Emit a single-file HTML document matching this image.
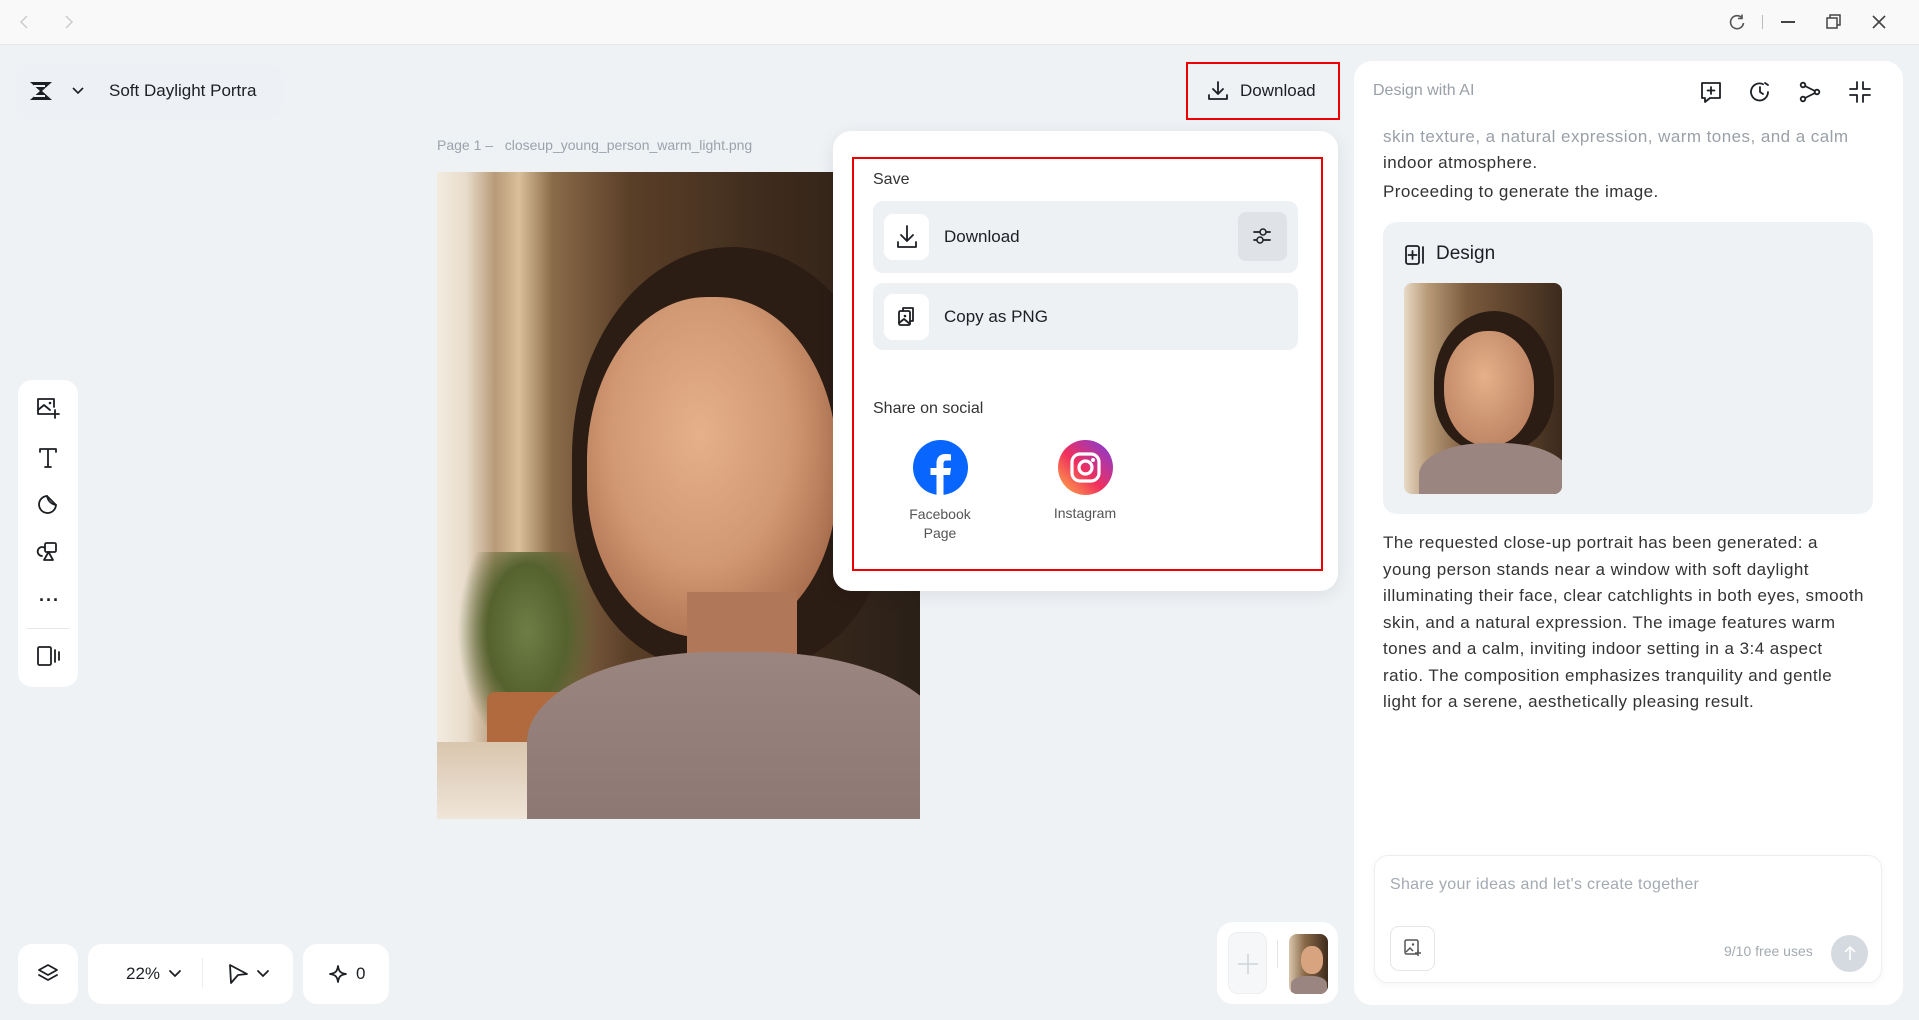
<!DOCTYPE html>
<html><head><meta charset="utf-8"><style>
*{box-sizing:border-box;margin:0;padding:0}
body{width:1919px;height:1020px;overflow:hidden;background:#eef2f5;font-family:"Liberation Sans",sans-serif;color:#1c1f23;position:relative}
.abs{position:absolute}
.top{left:0;top:0;width:1919px;height:45px;background:#f9f9f9;border-bottom:1px solid #e6e6e6}
.card{background:#fff;border-radius:14px}
svg{display:block}
.ic{stroke:#1c1f23;fill:none;stroke-width:1.8;stroke-linecap:round;stroke-linejoin:round}
.rt{font-size:17px;letter-spacing:0.45px}
</style></head><body>
<div class="abs top">
 <svg class="abs" style="left:18px;top:14px" width="14" height="16"><path d="M9 2 L3 8 L9 14" stroke="#ccc" fill="none" stroke-width="1.5"/></svg>
 <svg class="abs" style="left:62px;top:14px" width="14" height="16"><path d="M4 2 L10 8 L4 14" stroke="#ccc" fill="none" stroke-width="1.5"/></svg>
 <svg class="abs" style="left:1728px;top:13px" width="18" height="18"><path d="M14 5 A6.5 6.5 0 1 0 15.5 10" stroke="#555" fill="none" stroke-width="1.6"/><path d="M14 1.5 V5.5 H10" stroke="#555" fill="none" stroke-width="1.6"/></svg>
 <div class="abs" style="left:1762px;top:15px;width:1px;height:14px;background:#bbb"></div>
 <div class="abs" style="left:1781px;top:21px;width:14px;height:1.6px;background:#444"></div>
 <svg class="abs" style="left:1826px;top:14px" width="16" height="16"><rect x="1" y="4" width="10" height="10" stroke="#444" fill="none" stroke-width="1.5"/><path d="M4 4 V1 H14 V11 H11" stroke="#444" fill="none" stroke-width="1.5"/></svg>
 <svg class="abs" style="left:1871px;top:14px" width="16" height="16"><path d="M2 2 L14 14 M14 2 L2 14" stroke="#444" stroke-width="1.6"/></svg>
</div>

<div class="abs" style="left:17px;top:64px;width:265px;height:55px;background:#edf1f5;border-radius:14px"></div>
<svg class="abs" style="left:28px;top:80px" width="28" height="22"><path d="M2 2 H24 L14 11 L24 20 H2 L12 11 Z" fill="#1c1f23"/><path d="M6 6 H17 M6 16 H17" stroke="#edf1f5" stroke-width="2"/></svg>
<svg class="abs" style="left:72px;top:86px" width="12" height="10"><path d="M1 2 L6 7 L11 2" stroke="#1c1f23" fill="none" stroke-width="1.6"/></svg>
<div class="abs" style="left:109px;top:81px;font-size:17px">Soft Daylight Portra</div>

<div class="abs" style="left:437px;top:137px;font-size:14px;color:#9aa2ab">Page 1 –&nbsp;&nbsp; closeup_young_person_warm_light.png</div>

<div class="abs" style="left:437px;top:172px;width:483px;height:647px;overflow:hidden;background:linear-gradient(90deg,#f3ebe0 0%,#e8dccb 6%,#b89a78 12%,#d9bf9a 17%,#8a6a48 24%,#5a3f28 40%,#3d2a1c 70%,#2a2018 100%)">
 <div class="abs" style="left:20px;top:380px;width:140px;height:200px;background:radial-gradient(ellipse at 50% 40%,#6f7d45 0%,#55622f 40%,transparent 70%)"></div>
 <div class="abs" style="left:50px;top:520px;width:80px;height:70px;background:#b06a3e;border-radius:8px 8px 20px 20px"></div>
 <div class="abs" style="left:0;top:570px;width:200px;height:80px;background:linear-gradient(180deg,#d9c6ae,#f0e6da)"></div>
 <div class="abs" style="left:135px;top:75px;width:320px;height:420px;background:#2b1c14;border-radius:50% 50% 40% 40%"></div>
 <div class="abs" style="left:150px;top:125px;width:250px;height:340px;background:radial-gradient(ellipse at 45% 40%,#e5b08a 0%,#d29a74 45%,#a86c4c 80%);border-radius:48% 48% 45% 45%"></div>
 <div class="abs" style="left:250px;top:420px;width:110px;height:110px;background:#b07858"></div>
 <div class="abs" style="left:90px;top:480px;width:420px;height:200px;background:linear-gradient(180deg,#9b8580,#8a7570);border-radius:45% 45% 0 0"></div>
</div>

<div class="abs" style="left:1186px;top:62px;width:154px;height:58px;border:2px solid #e00"></div>
<svg class="abs" style="left:1207px;top:80px" width="22" height="22"><path d="M11 2 V14 M6 9 L11 14 L16 9 M2 15 V19 H20 V15" class="ic"/></svg>
<div class="abs" style="left:1240px;top:81px;font-size:17px">Download</div>

<div class="abs card" style="left:833px;top:131px;width:505px;height:460px;border-radius:18px;box-shadow:0 4px 18px rgba(0,0,0,.08)"></div>
<div class="abs" style="left:852px;top:157px;width:471px;height:414px;border:2px solid #e00"></div>
<div class="abs" style="left:873px;top:171px;font-size:16px;color:#333">Save</div>
<div class="abs" style="left:873px;top:201px;width:425px;height:72px;background:#eef1f4;border-radius:10px"></div>
<div class="abs" style="left:884px;top:214px;width:45px;height:46px;background:#fff;border-radius:9px"></div>
<svg class="abs" style="left:895px;top:224px" width="24" height="26"><path d="M12 2 V17 M6 11 L12 17 L18 11 M3 18 V23 H21 V18" class="ic"/></svg>
<div class="abs" style="left:944px;top:227px;font-size:17px">Download</div>
<div class="abs" style="left:1238px;top:212px;width:49px;height:49px;background:#dfe3e8;border-radius:8px"></div>
<svg class="abs" style="left:1250px;top:224px" width="24" height="24"><path d="M4 8 H20 M4 16 H20" class="ic" stroke-width="1.5"/><circle cx="13" cy="8" r="3" fill="#dfe3e8" stroke="#1c1f23" stroke-width="1.5"/><circle cx="10" cy="16" r="3" fill="#dfe3e8" stroke="#1c1f23" stroke-width="1.5"/></svg>
<div class="abs" style="left:873px;top:283px;width:425px;height:67px;background:#eef1f4;border-radius:10px"></div>
<div class="abs" style="left:884px;top:294px;width:45px;height:46px;background:#fff;border-radius:9px"></div>
<svg class="abs" style="left:896px;top:305px" width="22" height="24"><rect x="3" y="6" width="11" height="14" rx="1.5" class="ic"/><path d="M7 6 V3 H17 V16 H14" class="ic"/><circle cx="9" cy="11" r="1.3" fill="#1c1f23"/><path d="M3 18 L8 14 L14 19" class="ic"/></svg>
<div class="abs" style="left:944px;top:307px;font-size:17px">Copy as PNG</div>
<div class="abs" style="left:873px;top:400px;font-size:16px;color:#333">Share on social</div>
<svg class="abs" style="left:913px;top:440px" width="55" height="55"><circle cx="27.5" cy="27.5" r="27.5" fill="#0866ff"/><path d="M30.5 55 V35 H37 L38 28 H30.5 V23.5 C30.5 21.5 31.5 20.5 33.5 20.5 H38 V14.5 C36.5 14.2 34.5 14 32.5 14 C26.5 14 23.5 17.5 23.5 23 V28 H17.5 V35 H23.5 V55 Z" fill="#fff"/></svg>
<svg class="abs" style="left:1058px;top:440px" width="55" height="55"><defs><linearGradient id="ig" x1="0" y1="1" x2="1" y2="0"><stop offset="0" stop-color="#fdb446"/><stop offset=".45" stop-color="#f12f5d"/><stop offset="1" stop-color="#7a3ce0"/></linearGradient></defs><circle cx="27.5" cy="27.5" r="27.5" fill="url(#ig)"/><rect x="14" y="14" width="27" height="27" rx="8" fill="none" stroke="#fff" stroke-width="3.2"/><circle cx="27.5" cy="27.5" r="6.5" fill="none" stroke="#fff" stroke-width="3.2"/><circle cx="35" cy="20" r="2" fill="#fff"/></svg>
<div class="abs" style="left:890px;top:505px;width:100px;text-align:center;font-size:14px;color:#555;line-height:19px">Facebook<br>Page</div>
<div class="abs" style="left:1035px;top:505px;width:100px;text-align:center;font-size:14px;color:#555">Instagram</div>

<div class="abs card" style="left:1354px;top:61px;width:549px;height:944px;border-radius:18px"></div>
<div class="abs" style="left:1373px;top:82px;font-size:16px;color:#9aa0a8">Design with AI</div>
<svg class="abs" style="left:1699px;top:80px" width="24" height="24"><path d="M3 3 H21 V18 H11 L6 22 V18 H3 Z" class="ic"/><path d="M12 7 V14 M8.5 10.5 H15.5" class="ic"/></svg>
<svg class="abs" style="left:1748px;top:80px" width="24" height="24"><path d="M20 12 A8.5 8.5 0 1 1 15 4.2" class="ic"/><path d="M12 7 V12 L15 14" class="ic"/><path d="M17 3 L20 5" class="ic"/></svg>
<svg class="abs" style="left:1798px;top:80px" width="24" height="24"><circle cx="5" cy="5" r="2.3" class="ic"/><circle cx="19" cy="12" r="2.3" class="ic"/><circle cx="5" cy="19" r="2.3" class="ic"/><path d="M7 6 L17 11 M7 18 L17 13" class="ic"/></svg>
<svg class="abs" style="left:1848px;top:80px" width="24" height="24"><path d="M9 2 V9 H2 M15 2 V9 H22 M9 22 V15 H2 M15 22 V15 H22" class="ic"/></svg>
<div class="abs rt" style="left:1383px;top:124px;width:520px;line-height:26px;color:#9aa0a8;white-space:nowrap">skin texture, a natural expression, warm tones, and a calm<br><span style="color:#333">indoor atmosphere.</span></div>
<div class="abs rt" style="left:1383px;top:182px;color:#333">Proceeding to generate the image.</div>
<div class="abs" style="left:1383px;top:222px;width:490px;height:292px;background:#eef2f5;border-radius:14px"></div>
<svg class="abs" style="left:1404px;top:244px" width="22" height="22"><rect x="2" y="2" width="13" height="18" rx="2" class="ic"/><path d="M8.5 7 V15 M4.5 11 H12.5 M19 3 V19" class="ic"/></svg>
<div class="abs" style="left:1436px;top:243px;font-size:19px">Design</div>
<div class="abs" style="left:1404px;top:283px;width:158px;height:211px;border-radius:8px;overflow:hidden;background:linear-gradient(90deg,#e8dac6 0%,#b89a78 15%,#7a5a3c 40%,#3d2a1c 100%)">
 <div class="abs" style="left:30px;top:28px;width:120px;height:140px;background:#2b1c14;border-radius:50% 50% 40% 40%"></div>
 <div class="abs" style="left:40px;top:48px;width:90px;height:115px;background:radial-gradient(ellipse at 45% 40%,#e5b08a,#b07656);border-radius:48%"></div>
 <div class="abs" style="left:15px;top:160px;width:150px;height:70px;background:#9b8580;border-radius:45% 45% 0 0"></div>
</div>
<div class="abs rt" style="left:1383px;top:530px;width:520px;line-height:26.5px;color:#333;white-space:nowrap">The requested close-up portrait has been generated: a<br>young person stands near a window with soft daylight<br>illuminating their face, clear catchlights in both eyes, smooth<br>skin, and a natural expression. The image features warm<br>tones and a calm, inviting indoor setting in a 3:4 aspect<br>ratio. The composition emphasizes tranquility and gentle<br>light for a serene, aesthetically pleasing result.</div>

<div class="abs card" style="left:1374px;top:855px;width:508px;height:128px;border:1px solid #eceef0;box-shadow:0 2px 8px rgba(0,0,0,.04)"></div>
<div class="abs" style="left:1390px;top:876px;font-size:16px;color:#a4aab2;letter-spacing:0.3px">Share your ideas and let's create together</div>
<div class="abs" style="left:1390px;top:926px;width:45px;height:45px;border:1px solid #e3e6ea;border-radius:9px"></div>
<svg class="abs" style="left:1403px;top:938px" width="20" height="20"><rect x="2" y="2" width="13" height="14" rx="1.5" stroke="#555" fill="none" stroke-width="1.5"/><circle cx="10" cy="6.5" r="1.2" fill="#555"/><path d="M3 14 L7 10 L10 13 M15 12 V18 M12 15 H18" stroke="#555" fill="none" stroke-width="1.5"/></svg>
<div class="abs" style="left:1724px;top:943px;font-size:14px;color:#a4aab2">9/10 free uses</div>
<div class="abs" style="left:1831px;top:935px;width:37px;height:37px;border-radius:50%;background:#d5dae0"></div>
<svg class="abs" style="left:1841px;top:944px" width="18" height="18"><path d="M9 16 V3 M4 8 L9 3 L14 8" stroke="#fff" fill="none" stroke-width="1.6"/></svg>

<div class="abs card" style="left:18px;top:380px;width:60px;height:307px"></div>
<svg class="abs" style="left:35px;top:396px" width="26" height="26"><path d="M19 11 V3 H3 V18 H15" class="ic"/><path d="M3 14 L9 9 L15 14" class="ic"/><circle cx="15" cy="7" r="1.3" fill="#1c1f23"/><path d="M20 14 V22 M16 18 H24" class="ic"/></svg>
<svg class="abs" style="left:36px;top:446px" width="24" height="24"><path d="M4 6 V3 H20 V6 M12 3 V21 M9 21 H15" class="ic"/></svg>
<svg class="abs" style="left:36px;top:492px" width="24" height="24"><path d="M20 13 A8.5 8.5 0 1 1 11 4 Z" class="ic"/><path d="M11 4 C12 9 15 12 20 13" class="ic"/></svg>
<svg class="abs" style="left:36px;top:540px" width="24" height="24"><path d="M9 8 A4.5 4.5 0 1 0 6 16" class="ic"/><rect x="9" y="3" width="11" height="9" rx="1.5" class="ic"/><path d="M8 20 L12.5 12 L17 20 Z" class="ic"/></svg>
<div class="abs" style="left:39px;top:598px;font-size:18px;letter-spacing:1px;font-weight:bold;line-height:4px">···</div>
<div class="abs" style="left:26px;top:628px;width:44px;height:1px;background:#e6e8eb"></div>
<svg class="abs" style="left:36px;top:644px" width="26" height="24"><rect x="2" y="3" width="13" height="18" rx="1.5" class="ic"/><path d="M19 6 V18 M23 8 V16" class="ic"/></svg>

<div class="abs card" style="left:18px;top:944px;width:60px;height:60px"></div>
<svg class="abs" style="left:36px;top:962px" width="24" height="24"><path d="M12 3 L21 8 L12 13 L3 8 Z" class="ic"/><path d="M3 13 L12 18 L21 13" class="ic"/></svg>
<div class="abs card" style="left:88px;top:944px;width:205px;height:60px"></div>
<div class="abs" style="left:126px;top:964px;font-size:17px">22%</div>
<svg class="abs" style="left:168px;top:969px" width="14" height="10"><path d="M2 2 L7 7 L12 2" class="ic"/></svg>
<div class="abs" style="left:202px;top:958px;width:1px;height:30px;background:#eee"></div>
<svg class="abs" style="left:226px;top:962px" width="24" height="24"><path d="M4 3 L21 12 L12 13 L5 21 Z" class="ic"/></svg>
<svg class="abs" style="left:256px;top:969px" width="14" height="10"><path d="M2 2 L7 7 L12 2" class="ic"/></svg>
<div class="abs card" style="left:303px;top:944px;width:86px;height:60px"></div>
<svg class="abs" style="left:328px;top:964px" width="20" height="20"><path d="M10 2 C10.8 7.5 12.5 9.2 18 10 C12.5 10.8 10.8 12.5 10 18 C9.2 12.5 7.5 10.8 2 10 C7.5 9.2 9.2 7.5 10 2 Z" class="ic" stroke-width="1.6"/></svg>
<div class="abs" style="left:356px;top:964px;font-size:17px">0</div>

<div class="abs card" style="left:1217px;top:922px;width:121px;height:82px;border-radius:16px"></div>
<div class="abs" style="left:1228px;top:932px;width:39px;height:62px;border:1px solid #eceef0;background:#f5f7f9;border-radius:10px"></div>
<svg class="abs" style="left:1236px;top:952px" width="24" height="24"><path d="M12 2 V22 M2 12 H22" stroke="#d0d4d9" stroke-width="1.5"/></svg>
<div class="abs" style="left:1277px;top:940px;width:1px;height:28px;background:#e5e5e5"></div>
<div class="abs" style="left:1289px;top:934px;width:39px;height:60px;border-radius:8px;background:linear-gradient(90deg,#d9c6ae,#8a6a48 40%,#3d2a1c);overflow:hidden">
 <div class="abs" style="left:12px;top:12px;width:22px;height:28px;background:#d8a47f;border-radius:45%"></div>
 <div class="abs" style="left:2px;top:42px;width:36px;height:20px;background:#9b8580;border-radius:40% 40% 0 0"></div>
</div>
</body></html>
